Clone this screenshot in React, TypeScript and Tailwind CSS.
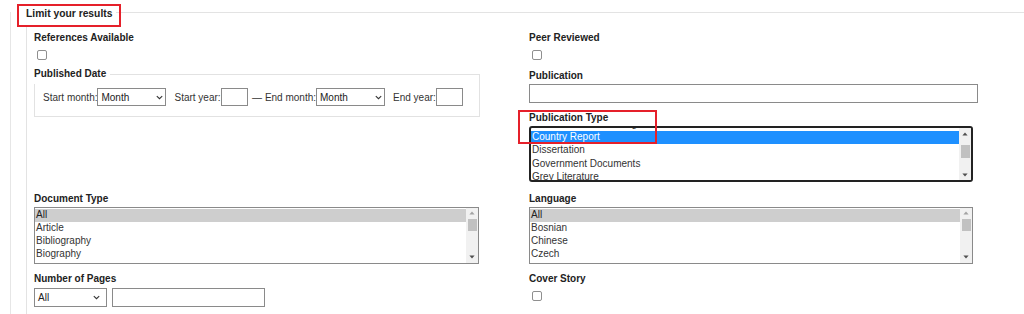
import React from "react";

function Label({ children }: { children: React.ReactNode }) {
  return (
    <div className="h-[14px] leading-[14px] text-[10px] font-bold text-[#222] whitespace-nowrap">
      {children}
    </div>
  );
}

function Checkbox() {
  return <div className="mt-[5px] ml-[3px] w-[10px] h-[10px] rounded-[2px] border border-[#8f8f8f] bg-white" />;
}

function Chevron() {
  return (
    <svg width="7" height="5" viewBox="0 0 7 5">
      <path d="M0.8 1.1 L3.5 3.7 L6.2 1.1" fill="none" stroke="#333" strokeWidth="1.1" />
    </svg>
  );
}

function Tri({ up, color }: { up?: boolean; color: string }) {
  return (
    <svg width="6" height="4" viewBox="0 0 6 4">
      <path d={up ? "M3 0.5L5.6 3.5H0.4Z" : "M0.4 0.5H5.6L3 3.5Z"} fill={color} />
    </svg>
  );
}

type LBProps = {
  options: string[];
  sel: number;
  selCls: string;
  boxCls: string;
  listCls: string;
  upColor: string;
  thumbCls: string;
};

function ListBox({ options, sel, selCls, boxCls, listCls, upColor, thumbCls }: LBProps) {
  return (
    <div className={boxCls}>
      <div className="flex-1 overflow-hidden">
        <div className={listCls}>
          {options.map((o, i) => (
            <div
              key={o}
              className={
                "h-[13.3px] leading-[12px] pl-[1px] text-[10px] whitespace-nowrap " +
                (i === sel ? selCls : "text-[#333]")
              }
            >
              {o}
            </div>
          ))}
        </div>
      </div>
      <div className="w-[12px] bg-[#f1f1f1] flex flex-col">
        <div className="h-[11px] flex items-center justify-center">
          <Tri up color={upColor} />
        </div>
        <div className={thumbCls} />
        <div className="flex-1" />
        <div className="h-[11px] flex items-center justify-center">
          <Tri color="#505050" />
        </div>
      </div>
    </div>
  );
}

export default function App() {
  return (
    <div className="relative w-[1024px] h-[314px] overflow-hidden bg-white font-['Liberation_Sans',Arial,sans-serif]">
      <div className="ml-[10px] h-full border-l border-[#e6e6e6]">
        <div className="ml-[15px] mt-[12px] h-[340px] border-l border-t border-[#e3e3e3]">
          <div className="-ml-px -mt-[6.5px] h-[20px] w-fit pr-[4px] bg-white text-[10.3px] leading-[14px] font-bold text-[#222] whitespace-nowrap">
            Limit your results
          </div>

          <div className="pl-[7px] pt-[4px] grid grid-cols-[446px_449px] grid-rows-[38px_42px_81px_80.5px_auto] gap-x-[49px]">
            {/* Row A */}
            <div>
              <Label>References Available</Label>
              <Checkbox />
            </div>
            <div>
              <Label>Peer Reviewed</Label>
              <Checkbox />
            </div>

            {/* Row B/C left: Published Date */}
            <div className="row-span-2">
              <div className="mt-[5.5px] border border-[#e2e2e2] pb-[10px]">
                <div className="-ml-px -mt-[8px] -mb-[3px] h-[17px] w-fit pr-[4px] bg-white text-[10px] leading-[14px] font-bold text-[#222] whitespace-nowrap">
                  Published Date
                </div>
                <div className="mt-[7px] ml-[8px] flex items-center h-[18px] text-[10px] text-[#333] whitespace-nowrap">
                  <span>Start month:</span>
                  <div className="w-[69px] h-[18px] border border-[#8a8a8a] bg-white flex items-center justify-between pl-[3px] pr-[2px] text-[#222]">
                    <span>Month</span>
                    <Chevron />
                  </div>
                  <span className="ml-[8px]">Start year:</span>
                  <div className="w-[27px] h-[18px] border border-[#8a8a8a] bg-white" />
                  <span className="ml-[4.5px]">— End month:</span>
                  <div className="w-[69px] h-[18px] border border-[#8a8a8a] bg-white flex items-center justify-between pl-[3px] pr-[2px] text-[#222]">
                    <span>Month</span>
                    <Chevron />
                  </div>
                  <span className="ml-[8px]">End year:</span>
                  <div className="w-[27px] h-[18px] border border-[#8a8a8a] bg-white" />
                </div>
              </div>
            </div>

            {/* Row B right: Publication */}
            <div>
              <Label>Publication</Label>
              <div className="mt-[1px] w-[449px] h-[19px] border border-[#8a8a8a] bg-white" />
            </div>

            {/* Row C right: Publication Type */}
            <div>
              <Label>Publication Type</Label>
              <ListBox
                options={[
                  "Conference Proceedings",
                  "Country Report",
                  "Dissertation",
                  "Government Documents",
                  "Grey Literature",
                  "Journal",
                ]}
                sel={1}
                selCls="bg-[#1e90ff] text-white"
                boxCls="mt-[1.5px] w-[444px] h-[56.3px] border-2 border-[#222] rounded-[3px] flex overflow-hidden bg-white"
                listCls="-mt-[10.3px]"
                upColor="#505050"
                thumbCls="mt-[6px] ml-[1.5px] mr-[1px] h-[12.7px] bg-[#c1c1c1]"
              />
            </div>

            {/* Row D */}
            <div>
              <Label>Document Type</Label>
              <ListBox
                options={["All", "Article", "Bibliography", "Biography", "Book Part"]}
                sel={0}
                selCls="bg-[#cecece] text-[#222]"
                boxCls="mt-[1px] w-[445px] h-[57px] border border-[#8a8a8a] flex overflow-hidden bg-white"
                listCls="pt-[1px]"
                upColor="#a3a3a3"
                thumbCls="ml-[1.5px] mr-[1px] h-[12.7px] bg-[#c1c1c1]"
              />
            </div>
            <div>
              <Label>Language</Label>
              <ListBox
                options={["All", "Bosnian", "Chinese", "Czech", "Dutch; Flemish"]}
                sel={0}
                selCls="bg-[#cecece] text-[#222]"
                boxCls="mt-[1px] w-[444px] h-[57px] border border-[#8a8a8a] flex overflow-hidden bg-white"
                listCls="pt-[1px]"
                upColor="#a3a3a3"
                thumbCls="ml-[1.5px] mr-[1px] h-[12.7px] bg-[#c1c1c1]"
              />
            </div>

            {/* Row E */}
            <div>
              <Label>Number of Pages</Label>
              <div className="mt-[2px] flex items-center">
                <div className="w-[73px] h-[19px] border border-[#8a8a8a] bg-white flex items-center justify-between pl-[3px] pr-[6px] text-[10px] text-[#222]">
                  <span>All</span>
                  <Chevron />
                </div>
                <div className="ml-[5px] w-[153px] h-[19px] border border-[#8a8a8a] bg-white" />
              </div>
            </div>
            <div>
              <Label>Cover Story</Label>
              <Checkbox />
            </div>
          </div>
        </div>
      </div>

      {/* annotation boxes */}
      <div className="absolute left-[17px] top-[4px] w-[104px] h-[22.5px] border-[2.5px] border-[#e5202a]" />
      <div className="absolute left-[518px] top-[110px] w-[139px] h-[34px] border-[2.5px] border-[#e5202a]" />
    </div>
  );
}
